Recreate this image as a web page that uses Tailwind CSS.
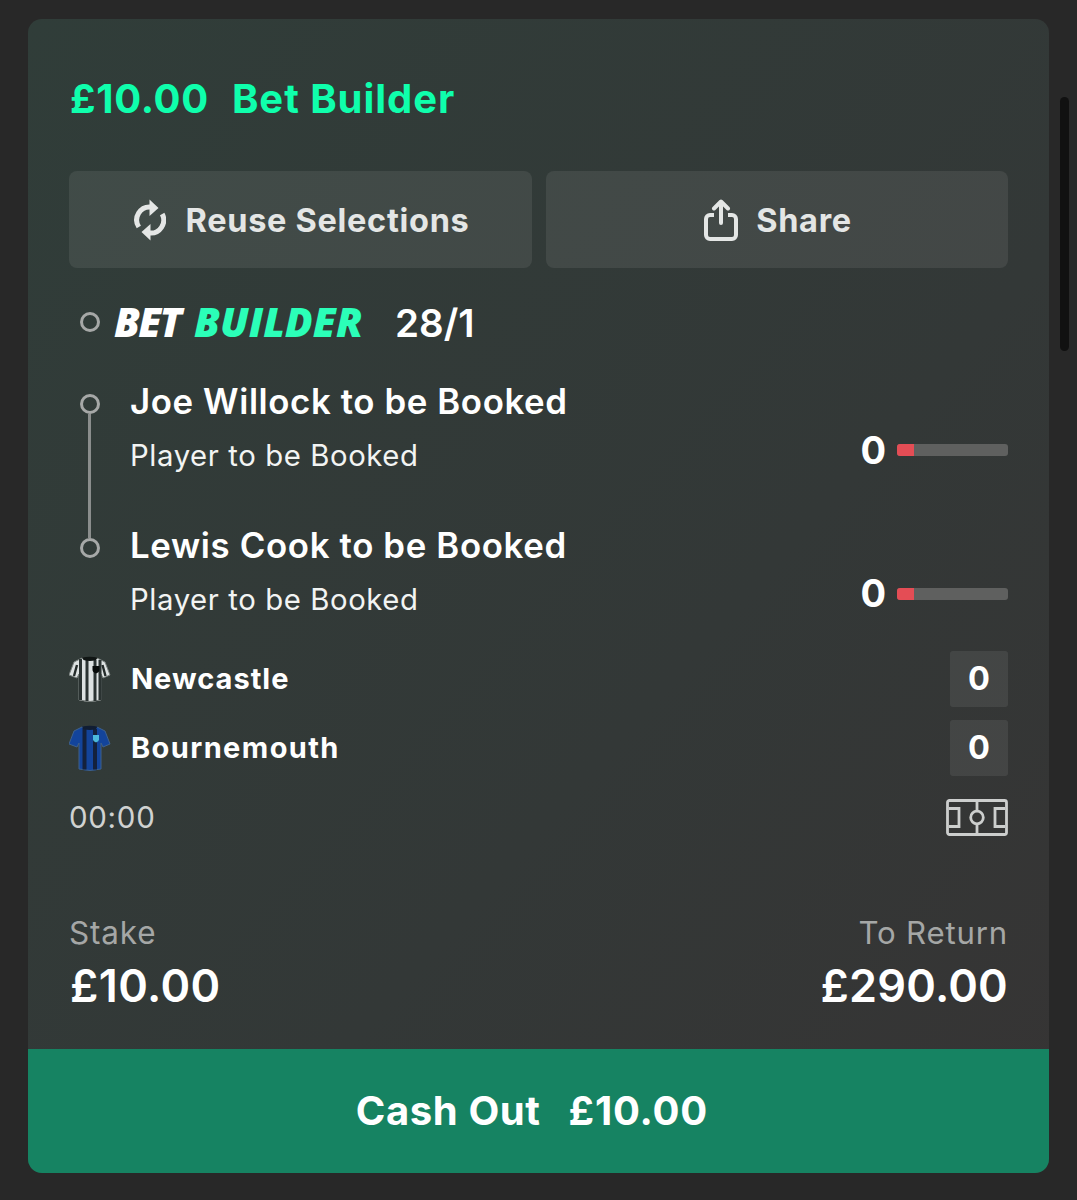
<!DOCTYPE html>
<html lang="en">
<head>
<meta charset="utf-8">
<title>Bet Builder</title>
<script src="https://cdn.jsdelivr.net/npm/@tailwindcss/browser@4"></script>
</head>
<body class="bg-[#282828] font-['Inter',sans-serif] text-white h-[1200px] overflow-hidden relative">
<main class="ml-[28px] pt-[19px] w-[1021px]">
  <article class="rounded-[14px] overflow-hidden bg-linear-to-br from-[#303d39] via-[#333837] via-60% to-[#363434]">
    <div class="px-[41px] h-[1030px]">
      <h1 class="h-[152px] pt-[8px] flex items-center gap-[23px] text-[40px] font-bold text-[#0fffac] whitespace-nowrap"><span class="ml-[1px] tracking-[0.700px]">£10.00</span><span class="tracking-[0.950px]">Bet Builder</span></h1>

      <div class="grid grid-cols-[463px_462px] gap-[14px] h-[97px] text-[32.500px] font-bold text-[#e4e6e5]">
        <button class="rounded-[8px] bg-white/8 pl-[3px] flex items-center justify-center gap-[19px]">
          <svg class="w-[32px] h-[42px]" viewBox="0 0 32 42" fill="none"><path d="M4.800 28A13 13 0 0 1 17 8M28.200 15A13 13 0 0 1 15.500 34" stroke="#e4e6e5" stroke-width="5"/><path d="M15.500 0.500L24.500 9L15.500 17ZM16.500 25V41.500L7.500 33Z" fill="#e4e6e5"/></svg>
          <span class="tracking-[0.700px] pt-[3px]">Reuse Selections</span>
        </button>
        <button class="rounded-[8px] bg-white/8 pl-[2px] flex items-center justify-center gap-[18px]">
          <svg class="w-[34px] h-[42px]" viewBox="0 0 34 42" fill="none" stroke="#e4e6e5" stroke-width="4" stroke-linecap="round" stroke-linejoin="round"><path d="M17 24V3M10 9.500L17 2.500L24 9.500"/><path d="M10 16H6A4 4 0 0 0 2 20V36A4 4 0 0 0 6 40H28A4 4 0 0 0 32 36V20A4 4 0 0 0 28 16H24" stroke-linecap="butt"/></svg>
          <span class="tracking-[0.700px] pt-[3px]">Share</span>
        </button>
      </div>

      <div class="h-[109px] pl-[11px] flex items-center whitespace-nowrap">
        <span class="size-[20px] mb-[2px] rounded-full border-[3px] border-[#a6a8a7]"></span>
        <span class="ml-[14px] mb-[2px] w-[281px] flex font-['Open_Sans',sans-serif] font-extrabold italic text-[41px]"><span class="w-[80px] tracking-[-1.800px]">BET</span><span class="text-[#2bffb8]">BUILDER</span></span>
        <span class="pt-[2px] text-[38.500px] font-semibold">28/1</span>
      </div>

      <div class="h-[143px] flex">
        <div class="w-[61px] pl-[11px] pt-[17px] flex flex-col">
          <span class="size-[20px] shrink-0 rounded-full border-[3px] border-[#a6a8a7]"></span>
          <span class="ml-[8px] w-[3px] h-[124px] shrink-0 bg-[#8b8e8d]"></span>
        </div>
        <div class="grow whitespace-nowrap">
          <h2 class="leading-[49px] text-[34.800px] font-semibold tracking-[0.600px]">Joe Willock to be Booked</h2>
          <p class="leading-[60px] text-[29.300px] text-[#f2f4f3] tracking-[0.600px]">Player to be Booked</p>
        </div>
        <div class="h-[146px] flex items-center gap-[11px]">
          <span class="text-[38px] font-bold">0</span>
          <div class="w-[111px] h-[12px] rounded-[3px] bg-[#5f605f] overflow-hidden"><div class="w-[17px] h-full bg-[#e44d55]"></div></div>
        </div>
      </div>

      <div class="h-[131px] flex">
        <div class="w-[61px] pl-[11px] pt-[18px]">
          <span class="block size-[20px] rounded-full border-[3px] border-[#a6a8a7]"></span>
        </div>
        <div class="grow whitespace-nowrap">
          <h2 class="leading-[51px] text-[34.800px] font-semibold tracking-[0.640px]">Lewis Cook to be Booked</h2>
          <p class="leading-[58px] text-[29.300px] text-[#f2f4f3] tracking-[0.600px]">Player to be Booked</p>
        </div>
        <div class="h-[147px] flex items-center gap-[11px]">
          <span class="text-[38px] font-bold">0</span>
          <div class="w-[111px] h-[12px] rounded-[3px] bg-[#5f605f] overflow-hidden"><div class="w-[17px] h-full bg-[#e44d55]"></div></div>
        </div>
      </div>

      <div class="flex flex-col gap-[13px] text-[29px] font-bold">
        <div class="h-[56px] flex items-center">
          <svg class="w-[42px] h-[46px] shrink-0" viewBox="0 0 42 46"><path d="M13 2L5 6L0 19L8 22L10 18V44Q21 47 32 44V18L34 22L41 19L36 6L28 2Q21 5 13 2Z" fill="#dde2e2" stroke="#777e7c"/><path d="M11.500 3V44M18 4V45M26 4V45M31 4V44" stroke="#2b3332" stroke-width="3"/><path d="M8 9L5 20M33.500 9L36.500 20" stroke="#242b2a" stroke-width="2.400"/><path d="M13 1.500Q21 0 28.500 1.500L27 4Q21 6 14.500 4Z" fill="#101514"/><path d="M23.500 10H30.500V14Q30.500 16 27 17.500Q23.500 16 23.500 14Z" fill="#070b0a"/></svg>
          <span class="ml-[20px] grow tracking-[1px]">Newcastle</span>
          <span class="w-[58px] h-full rounded-[3px] bg-white/8 flex items-center justify-center text-[32.500px]">0</span>
        </div>
        <div class="h-[56px] flex items-center">
          <svg class="w-[42px] h-[46px] shrink-0" viewBox="0 0 42 46"><path d="M13 2L5 6L0 19L8 22L10 18V44Q21 47 32 44V18L34 22L41 19L36 6L28 2Q21 5 13 2Z" fill="#13449b" stroke="#3e618c"/><path d="M15.500 3V44.500M26 4V44.500" stroke="#14213c" stroke-width="4"/><path d="M13 1.500Q21 0 28.500 1.500L27 4Q21 6 14.500 4Z" fill="#101d33"/><path d="M24 10H30V14.500Q30 16.500 27 17.500Q24 16.500 24 14.500Z" fill="#4cb9dc"/></svg>
          <span class="ml-[20px] grow tracking-[1.400px]">Bournemouth</span>
          <span class="w-[58px] h-full rounded-[3px] bg-white/8 flex items-center justify-center text-[32.500px]">0</span>
        </div>
      </div>

      <div class="h-[82px] flex items-center justify-between text-[29.500px] text-[#d0d2d1]">
        <span class="tracking-[0.700px]">00:00</span>
        <svg class="w-[62px] h-[37px]" viewBox="0 0 62 37" fill="none" stroke="#cccecd" stroke-width="2.800"><rect x="1.500" y="1.500" width="59" height="34" rx="2"/><path d="M31 1V12M31 25V36M3 9.500H13V27.500H3M59 9.500H49V27.500H59"/><circle cx="31" cy="18.500" r="6.300"/></svg>
      </div>

      <div class="pt-[50px] flex justify-between whitespace-nowrap">
        <div>
          <p class="leading-[50px] text-[31.500px] text-[#a5a7a6] tracking-[0.800px]">Stake</p>
          <p class="ml-[1px] leading-[55px] text-[45px] font-semibold tracking-[0.400px]">£10.00</p>
        </div>
        <div class="text-right">
          <p class="leading-[50px] text-[31.200px] text-[#a5a7a6] tracking-[0.800px]">To Return</p>
          <p class="leading-[55px] text-[45px] font-semibold tracking-[0.200px]">£290.00</p>
        </div>
      </div>
    </div>
    <button class="w-full h-[124px] bg-[#168362] pr-[13px] flex items-center justify-center gap-[28px] text-[40px] font-bold"><span class="tracking-[0.600px]">Cash Out</span><span class="tracking-[0.800px]">£10.00</span></button>
  </article>
</main>
<div class="absolute left-[1060px] top-[97px] w-[9px] h-[254px] rounded-full bg-[#111111]"></div>
</body>
</html>
